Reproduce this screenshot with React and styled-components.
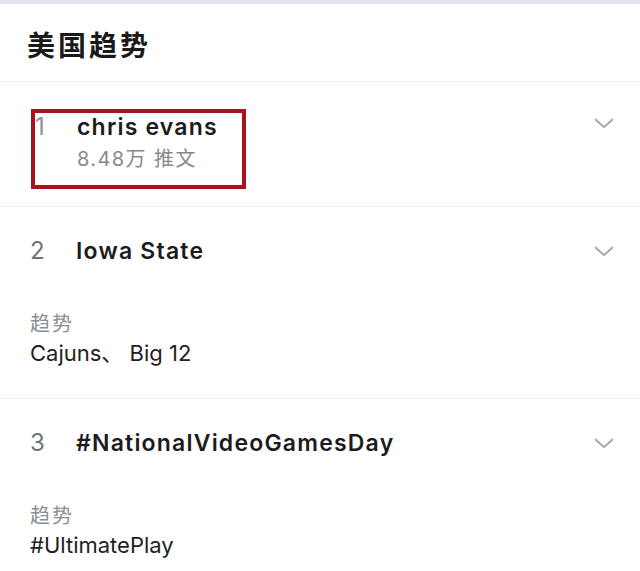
// <========== IMPORTS ==========>

import React from "react"
import styled, { createGlobalStyle } from "styled-components"

// <========== DATA ==========>

const TrendsData = [
  {
    rank: 1,
    name: "chris evans",
    meta: "8.48万 推文",
    marked: true,
  },
  {
    rank: 2,
    name: "Iowa State",
    label: "趋势",
    related: "Cajuns、 Big 12",
  },
  {
    rank: 3,
    name: "#NationalVideoGamesDay",
    label: "趋势",
    related: "#UltimatePlay",
  },
]

// <========== COMPONENT ==========>

const Chevron = () => (
  <svg width="20" height="11" viewBox="0 0 20 11" fill="none">
    <path d="M1.5 1.5 L10 9.2 L18.5 1.5" stroke="#a3a3a3" strokeWidth="1.8" strokeLinecap="round" strokeLinejoin="round" />
  </svg>
)

function Trends() {
  return (
    <Page>
      <GlobalStyle />
      <Header>
        <Heading>美国趋势</Heading>
      </Header>
      {TrendsData.map((item) => (
        <Section key={item.rank} $top={item.marked ? 27 : 30} $bottom={item.marked ? 17 : 31}>
          <Head>
            {item.marked ? (
              <Highlight>
                <Rank $w={42} $light>{item.rank}</Rank>
                <div>
                  <Title>{item.name}</Title>
                  <Meta>{item.meta}</Meta>
                </div>
              </Highlight>
            ) : (
              <>
                <Rank $w={46}>{item.rank}</Rank>
                <Title>{item.name}</Title>
              </>
            )}
            <More>
              <Chevron />
            </More>
          </Head>
          {item.label && (
            <Body>
              <Label>{item.label}</Label>
              <Related>{item.related}</Related>
            </Body>
          )}
        </Section>
      ))}
    </Page>
  )
}

export default Trends

// <========== STYLES ==========>

const GlobalStyle = createGlobalStyle`
  html, body {
    margin: 0;
    padding: 0;
    background: #fff;
  }
  body {
    font-family: Inter, "Noto Sans CJK SC", sans-serif;
    color: #1c1c1c;
  }
`

const Page = styled.div`
  width: 640px;
  min-height: 571px;
  border-top: 4px solid #e4e4ec;
  background: #fff;
  overflow: hidden;
`

const Header = styled.div`
  height: 78px;
  display: flex;
  align-items: center;
  padding: 2px 0 0 27px;
  box-sizing: border-box;
  border-bottom: 1px solid #efefef;
`

const Heading = styled.h1`
  margin: 0;
  font-family: "Noto Sans CJK SC", sans-serif;
  font-size: 28px;
  font-weight: 700;
  letter-spacing: 3px;
  line-height: 40px;
  color: #1a1a1a;
`

const Section = styled.div`
  padding: ${(p) => p.$top}px 27px ${(p) => p.$bottom}px 30px;
  border-bottom: 1px solid #efefef;
`

const Head = styled.div`
  display: flex;
  align-items: flex-start;
`

const Highlight = styled.div`
  display: flex;
  align-items: flex-start;
  box-sizing: border-box;
  width: 215px;
  margin-left: 1px;
  border: 4px solid #a8141c;
  padding: 0 0 13px 0;
`

const Rank = styled.div`
  width: ${(p) => p.$w}px;
  flex-shrink: 0;
  font-size: 24px;
  line-height: 28px;
  color: ${(p) => (p.$light ? "#8f9398" : "#6f7378")};
`

const Title = styled.div`
  flex: 1;
  font-size: 23px;
  font-weight: 600;
  line-height: 28px;
  letter-spacing: 1.2px;
  color: #1c1c1c;
`

const Meta = styled.div`
  margin-top: 5px;
  font-size: 20px;
  line-height: 26px;
  letter-spacing: 1.4px;
  color: #85898e;
`

const More = styled.div`
  margin-left: auto;
  height: 28px;
  display: flex;
  align-items: center;
  margin-right: -1px;
`

const Body = styled.div`
  padding-top: 46px;
`

const Label = styled.div`
  font-size: 20px;
  line-height: 26px;
  letter-spacing: 2px;
  color: #8a8e93;
`

const Related = styled.div`
  margin-top: 2px;
  font-size: 22px;
  line-height: 28px;
  letter-spacing: 0;
  color: #222;
`
